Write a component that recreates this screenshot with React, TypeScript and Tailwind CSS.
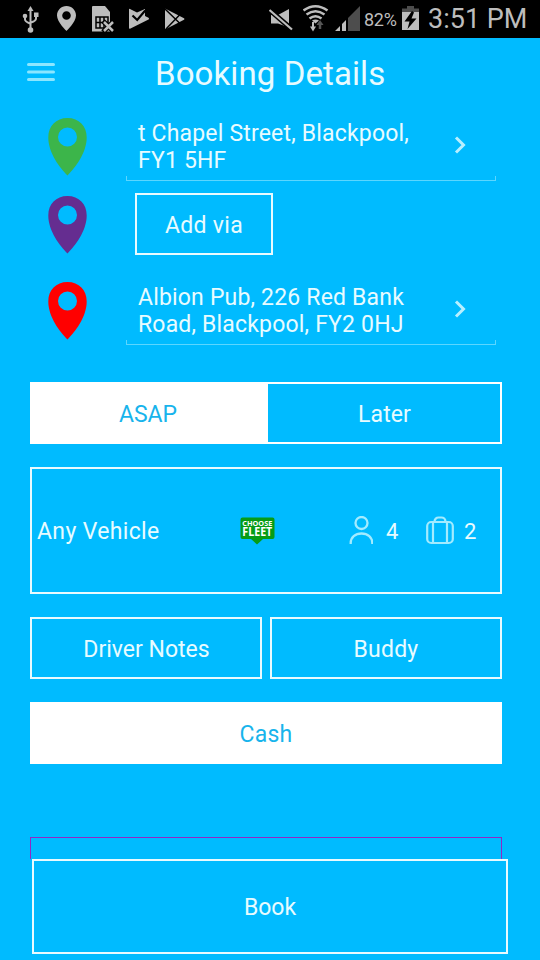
import React, { useState } from 'react';
import clsx from 'clsx';

const StatusBar: React.FC = () => (
  <div className="flex h-[38px] shrink-0 items-center bg-black pl-[22px] pr-3 text-[#bdbdbd]">
    {/* Notifications */}
    <svg width="18" height="38" viewBox="22 0 18 38" fill="none" stroke="currentColor" strokeWidth="2">
      <path d="M30.500 9v20M25 15v4.500q0 2 5 4M36 16v2.500q0 2.500-5 4" />
      <g fill="currentColor" stroke="none">
        <path d="M30.500 6l3 5h-6z" />
        <circle cx="30.500" cy="30" r="2.800" />
        <circle cx="25" cy="16" r="2.300" />
        <rect x="34" y="12.500" width="4.500" height="4.500" />
      </g>
    </svg>
    <svg className="ml-[17px]" width="19" height="38" viewBox="57 0 19 38" fill="currentColor">
      <path fillRule="evenodd" d="M66.500 6c-5.300 0-9.500 4.200-9.500 9.500 0 6.500 9.500 15.500 9.500 15.500s9.500-9 9.500-15.500c0-5.300-4.200-9.500-9.500-9.500zm0 5.200a4.300 4.300 0 1 1 0 8.600 4.300 4.300 0 0 1 0-8.600z" />
    </svg>
    <svg className="ml-4" width="22" height="38" viewBox="92 0 22 38" fill="none">
      <path d="M93 6h12l5 6v19.500H92V7q0-1 1-1z" fill="currentColor" />
      <path d="M96 17h12v11H96zM100 17v11M104 17v11M96 22.500h12" stroke="#000" strokeWidth="1.500" />
      <path d="M103 21l11 11M114 21l-11 11" stroke="#000" strokeWidth="5" />
      <path d="M104 22l9 9M113 22l-9 9" stroke="currentColor" strokeWidth="2.500" />
    </svg>
    <svg className="ml-[15px]" width="20" height="38" viewBox="129 0 20 38">
      <path d="M129 9.500q0-1 1-.5l7 3.500 8-3.500v7l3.500 1.800q1 1 0 1.800l-18.500 9.200q-1 .2-1-.8z" fill="currentColor" />
      <path d="M132.500 15.500l4.700 4.500 8-9.500" fill="none" stroke="#000" strokeWidth="2.200" />
    </svg>
    <svg className="ml-4" width="20" height="38" viewBox="165 0 20 38">
      <path d="M165 9.500q0-1 1-.5l18 9.300q1 .7 0 1.500l-18 9.200q-1 .2-1-.8z" fill="currentColor" />
      <path d="M165 9l15 14.500M166 29l14-14.500" fill="none" stroke="#000" strokeWidth="1.500" />
    </svg>

    {/* Device state */}
    <svg className="ml-auto" width="25" height="38" viewBox="269 0 25 38" fill="currentColor">
      <path d="M271 15h7l11-6v18.500l-11-4h-7z" />
      <path d="M269.500 10l22.500 19.500" stroke="#000" strokeWidth="5" />
      <path d="M269.500 10l22.500 19.500" stroke="currentColor" strokeWidth="2.200" />
    </svg>
    <svg className="ml-[9px]" width="27" height="38" viewBox="303 0 27 38" fill="none" stroke="currentColor" strokeWidth="2.500">
      <path d="M303.500 10.500q12-8.500 24 0M306.500 14.500q9-6.500 18 0M309.500 18.500q6-4.500 12 0" />
      <path d="M312 20.500q3.500-2 7 0l-3.500 3z" fill="currentColor" stroke="none" />
      <path d="M313 22v6" strokeWidth="2" />
      <path d="M310 26.500h6l-3 5z" fill="currentColor" stroke="none" />
      <path d="M320 29v-6" stroke="#555" />
      <path d="M316.500 25l3.500-5 3.500 5z" fill="#555" stroke="none" />
    </svg>
    <svg className="ml-[5px]" width="25" height="38" viewBox="335 0 25 38">
      <path d="M335 31l5-5v5zM342 24l4-4v11h-4z" fill="currentColor" />
      <path d="M348 18l12-12v25h-12z" fill="#4d4d4d" />
    </svg>
    <span className="ml-1 w-[34px] pt-[2px] text-[18px] leading-none tracking-[-0.3px] whitespace-nowrap">82%</span>
    <svg className="ml-1" width="17" height="38" viewBox="402 0 17 38">
      <path d="M407 6h7v2.500h5V12h-17V8.500h5z" fill="#4d4d4d" />
      <path d="M402 12h17v18h-17z" fill="currentColor" />
      <path d="M412 11l-7.500 10.500h5l-2 7.500 9-10.500h-5l2.500-6z" fill="#000" />
    </svg>
    <span className="ml-[9px] w-[100px] pt-px text-[27px] leading-none whitespace-nowrap">3:51 PM</span>
  </div>
);

const Pin: React.FC<{ className: string }> = ({ className }) => (
  <svg className={clsx('shrink-0', className)} width="39" height="58" viewBox="0 0 39 58" fill="currentColor">
    <path fillRule="evenodd" d="M19.500 0C8 0 .3 8 .3 19.500.300 35 12 50 19.500 57.500 27 50 38.700 35 38.700 19.500 38.700 8 31 0 19.500 0zm0 9.500a9.500 9.500 0 1 1 0 19 9.500 9.500 0 0 1 0-19z" />
  </svg>
);

const AddressField: React.FC<{ lines: string[] }> = ({ lines }) => (
  <div className="ml-[39px] flex h-[66px] w-[370px] flex-col">
    <div className="flex h-[61px] items-center pl-3">
      <p className="w-[316px] pt-[2px] text-[23px] leading-[27px] tracking-[0.18px]">
        {lines.map(line => (
          <span key={line} className="block whitespace-nowrap">{line}</span>
        ))}
      </p>
      <svg className="mb-[2px]" width="14" height="18" viewBox="0 0 14 18" fill="none" stroke="#b8efff" strokeWidth="3">
        <path d="M2 1.500l7.500 7.500L2 16.500" />
      </svg>
    </div>
    <div className="h-[5px] border-x border-b border-[#5cd6ff]" />
  </div>
);

const outlineButton = 'flex items-center justify-center border-2 border-[#e8faff] pt-1 text-[23px]';

const App: React.FC = () => {
  const [when, setWhen] = useState<'ASAP' | 'Later'>('ASAP');

  return (
    <div className="flex h-[960px] w-[540px] flex-col overflow-hidden bg-[#00bbff] font-[Roboto,sans-serif] text-[#e8fbff]">
      <StatusBar />

      <header className="flex h-[77px] shrink-0 items-start pl-[27px]">
        <svg className="mt-[25px]" width="28" height="19" viewBox="0 0 28 19" stroke="#8ce6ff" strokeWidth="3" strokeLinecap="round">
          <path d="M1.500 1.500h25M1.500 9h25M1.500 16.500h25" />
        </svg>
        <h1 className="ml-[100px] mt-4 text-[33px] leading-[40px] tracking-[0.1px] whitespace-nowrap">Booking Details</h1>
      </header>

      {/* Route */}
      <section className="h-[267px] shrink-0 pl-12">
        <div className="flex h-[78px] items-start">
          <Pin className="mt-[3px] text-[#3cb54a]" />
          <AddressField lines={['t Chapel Street, Blackpool,', 'FY1 5HF']} />
        </div>
        <div className="flex h-[86px] items-start">
          <Pin className="mt-[3px] text-[#652d90]" />
          <button className={clsx(outlineButton, 'ml-12 h-[62px] w-[138px] tracking-[0.3px]')}>Add via</button>
        </div>
        <div className="flex items-start">
          <Pin className="mt-[3px] text-[#ff0000]" />
          <AddressField lines={['Albion Pub, 226 Red Bank', 'Road, Blackpool, FY2 0HJ']} />
        </div>
      </section>

      {/* Options */}
      <section className="ml-[30px] flex w-[472px] shrink-0 flex-col gap-[23px] self-start">
        <div className="flex h-[62px] border-2 border-white">
          {(['ASAP', 'Later'] as const).map(option => (
            <button
              key={option}
              onClick={() => setWhen(option)}
              className={clsx('h-full pt-1 text-[23px]', option === 'ASAP' ? 'w-[236px] pr-1' : 'flex-1 pl-px tracking-[0.1px]', when === option && 'bg-white text-[#18b4ec]')}
            >
              {option}
            </button>
          ))}
        </div>

        <div className="flex h-[127px] items-center border-2 border-[#e8faff] pl-[5px] text-[23px]">
          <span className="w-[202px] pt-[3px] tracking-[0.35px]">Any Vehicle</span>
          <svg width="36" height="28" viewBox="0 0 36 28" fontFamily="Open Sans, sans-serif" fontWeight="700" textAnchor="middle">
            <path d="M3.500.500h30q2 0 2 2V20q0 2-2 2H24l-6 5.500-6-5.500H3.500q-2 0-2-2V2.500q0-2 2-2z" fill="#079c16" />
            <text x="18.300" y="8.800" fontSize="7.500" textLength="30" lengthAdjust="spacingAndGlyphs" fill="#fff">CHOOSE</text>
            <text x="18.300" y="18.700" fontSize="11.500" textLength="30" lengthAdjust="spacingAndGlyphs" fill="#fff">FLEET</text>
          </svg>
          <svg className="ml-[73px]" width="25" height="29" viewBox="0 0 25 29" fill="none" stroke="#a3ebff" strokeWidth="2.300">
            <circle cx="13.500" cy="7" r="6" />
            <path d="M2.700 28v-1c0-5.500 4.500-9.500 10.800-9.500s10.800 4 10.800 9.500v1" />
          </svg>
          <span className="ml-[13px] w-[26px] pt-px text-[22px]">4</span>
          <svg className="ml-[14px]" width="28" height="29" viewBox="0 0 28 29" fill="none" stroke="#a3ebff" strokeWidth="2.200">
            <rect x="1.200" y="6" width="25.600" height="21" rx="4" />
            <path d="M7 6v21M21 6v21M8.500 6c0-3 2-4.500 4-4.500h3c2 0 4 1.500 4 4.500" />
          </svg>
          <span className="ml-[10px] pt-px text-[22px]">2</span>
        </div>

        <div className="grid h-[62px] grid-cols-2 gap-2">
          <button className={clsx(outlineButton, 'pl-px')}>Driver Notes</button>
          <button className={clsx(outlineButton, 'tracking-[0.2px]')}>Buddy</button>
        </div>

        <button className="h-[62px] bg-white pt-1 text-[23px] tracking-[0.2px] text-[#18b4ec]">Cash</button>
      </section>

      {/* Submit */}
      <footer className="mt-[73px] shrink-0">
        <div className="ml-[30px] h-[22px] w-[472px] border-x border-t border-[#9427c4]" />
        <button className={clsx(outlineButton, 'ml-8 h-[95px] w-[476px]')}>Book</button>
      </footer>
    </div>
  );
};

export default App;
